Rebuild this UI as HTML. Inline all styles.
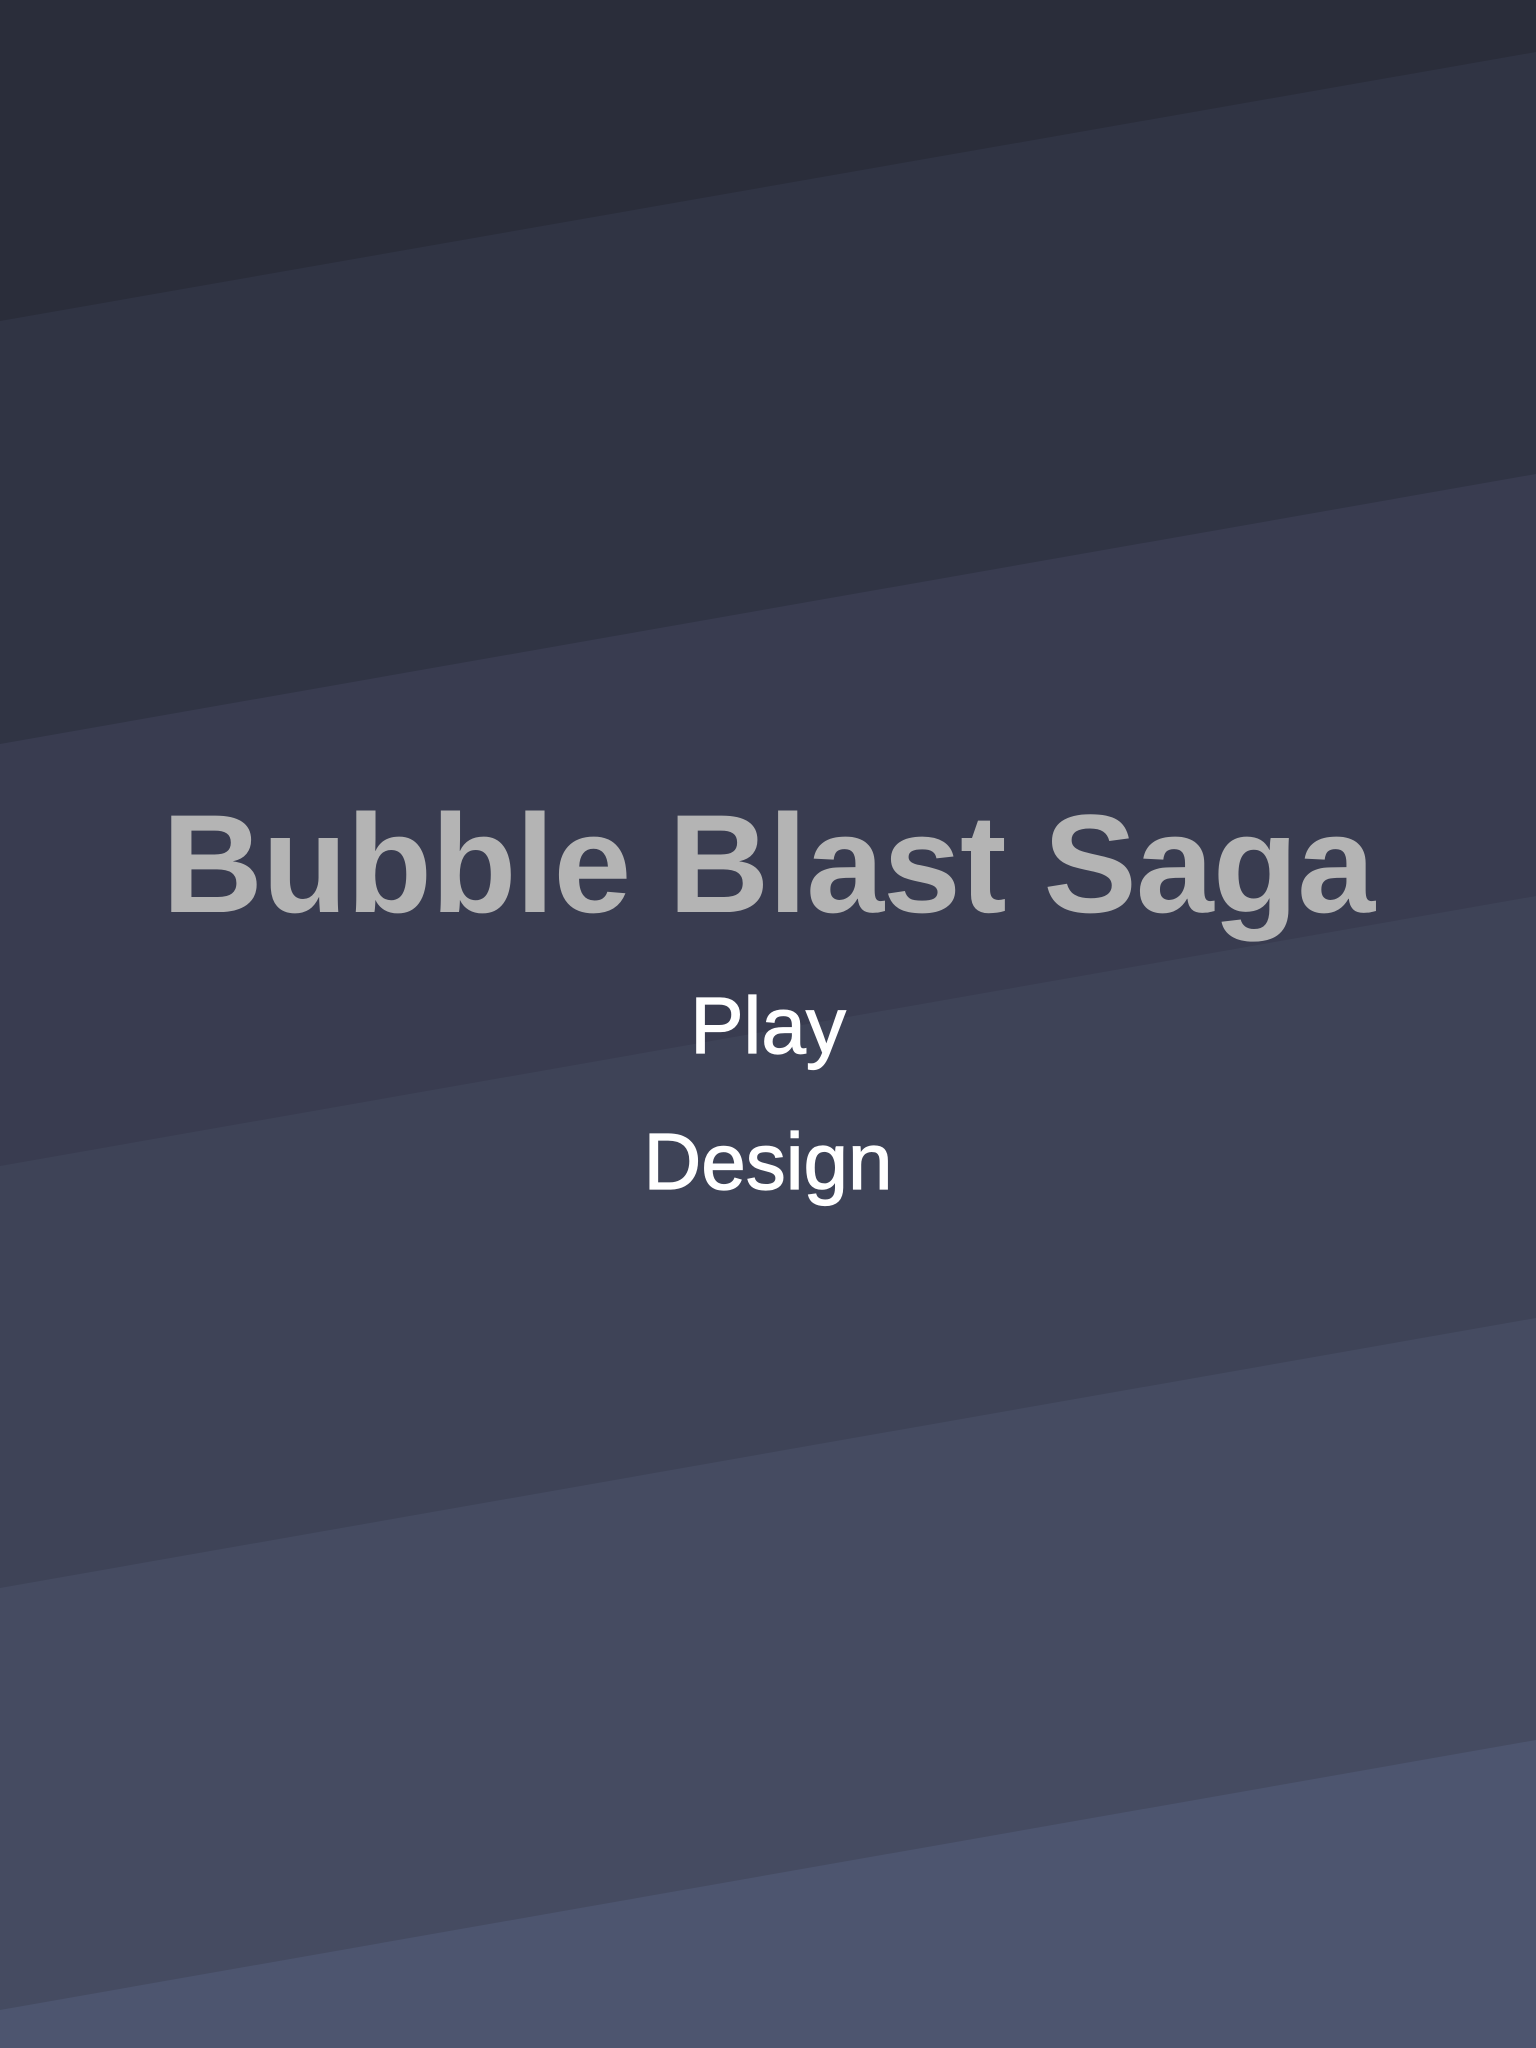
<!DOCTYPE html>
<html><head><meta charset="utf-8"><style>
html,body{margin:0;padding:0;width:1536px;height:2048px;overflow:hidden;background:#2a2d3a;}
svg{position:absolute;left:0;top:0}
.t{position:absolute;left:0;width:1536px;text-align:center;font-family:"Liberation Sans",sans-serif;white-space:nowrap}
#title{top:774px;font-size:140px;font-weight:bold;color:#b4b4b4;line-height:180px;letter-spacing:-1px}
#play{top:976px;font-size:80px;color:#fff;line-height:100px;-webkit-text-stroke:1.2px #fff}
#design{top:1112px;font-size:80px;color:#fff;line-height:100px;-webkit-text-stroke:1.2px #fff}
</style></head><body>
<svg width="1536" height="2048" viewBox="0 0 1536 2048">
<rect width="1536" height="2048" fill="#2a2d3a"/>
<polygon points="0,321 1536,52 1536,2048 0,2048" fill="#303444"/>
<polygon points="0,744 1536,474 1536,2048 0,2048" fill="#393c50"/>
<polygon points="0,1166 1536,896 1536,2048 0,2048" fill="#3e4357"/>
<polygon points="0,1588 1536,1318 1536,2048 0,2048" fill="#454b61"/>
<polygon points="0,2010 1536,1740 1536,2048 0,2048" fill="#4d556f"/>
</svg>
<div class="t" id="title">Bubble Blast Saga</div>
<div class="t" id="play">Play</div>
<div class="t" id="design">Design</div>
</body></html>
